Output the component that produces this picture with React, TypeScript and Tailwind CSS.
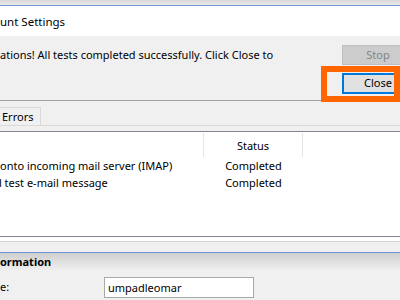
export default function App() {
  return (
    <div className="relative w-[400px] h-[300px] overflow-hidden bg-[#f0f0f0] text-black text-[11px] [font-family:'Noto_Sans',sans-serif]">
      <div className="h-[5px] bg-gradient-to-b from-[#d9d9d9] to-[#e9e9e9]" />
      <div className="h-px bg-[#7597d1]" />
      <div className="h-[30px] bg-white flex items-center text-[11.5px] leading-none pt-[2px] whitespace-nowrap">
        unt Settings
      </div>
      <div className="relative h-[64px] flex">
        <div className="w-[342px] shrink-0 pt-[11px] leading-[16px] whitespace-nowrap overflow-hidden">
          ations! All tests completed successfully. Click Close to
        </div>
        <div className="w-[72px] shrink-0 pt-[9px] flex flex-col gap-[8px]">
          <div className="h-[20px] bg-[#cccccc] border border-[#bfbfbf] text-[#838383] flex items-center justify-center">
            Stop
          </div>
          <div className="h-[21px] bg-[#e1e1e1] border-2 border-[#0078d7] flex items-center justify-center">
            Close
          </div>
        </div>
        <div className="absolute z-10 left-[321px] top-[30px] w-[79px] h-[36px] border-[6px] border-[#ff6600]" />
      </div>
      <div className="h-px bg-[#a0a0a0]" />
      <div className="h-[24px] flex items-end">
        <div className="h-[18px] w-[41px] border-t border-r border-[#d9d9d9] pl-[2px] pt-[1px] leading-[16px]">
          Errors
        </div>
      </div>
      <div className="h-px bg-[#d9d9d9]" />
      <div className="h-[5px]" />
      <div className="h-[106px] bg-white border-y border-[#828790]">
        <div className="flex h-[25px]">
          <div className="w-[204px] border-r border-[#e5e5e5] mt-px" />
          <div className="w-[99px] border-r border-[#e5e5e5] mt-px flex items-center justify-center leading-none pt-[1px]">
            Status
          </div>
        </div>
        <div className="flex h-[17px] leading-[17px] whitespace-nowrap">
          <div className="w-[204px]">onto incoming mail server (IMAP)</div>
          <div className="w-[99px] text-center">Completed</div>
        </div>
        <div className="flex h-[17px] leading-[17px] whitespace-nowrap">
          <div className="w-[204px] overflow-hidden">
            <span className="ml-[-5px]">d test e-mail message</span>
          </div>
          <div className="w-[99px] text-center">Completed</div>
        </div>
      </div>
      <div className="h-[4px] bg-white" />
      <div className="h-px bg-[#d5d5d5]" />
      <div className="h-[10px]" />
      <div className="h-px bg-[#6f96d2]" />
      <div className="h-[47px] bg-[linear-gradient(to_bottom,#cfcfcf,#f0f0f0_18px)]">
        <div className="h-[18px] leading-[18px] text-[11px] font-bold whitespace-nowrap">ormation</div>
        <div className="flex mt-[6px]">
          <div className="w-[104px] pt-[2px] leading-[16px]">e:</div>
          <div className="w-[150px] h-[21px] bg-white border border-[#a9a9a9] pl-[3px] flex items-center leading-none">
            umpadleomar
          </div>
        </div>
      </div>
    </div>
  );
}
